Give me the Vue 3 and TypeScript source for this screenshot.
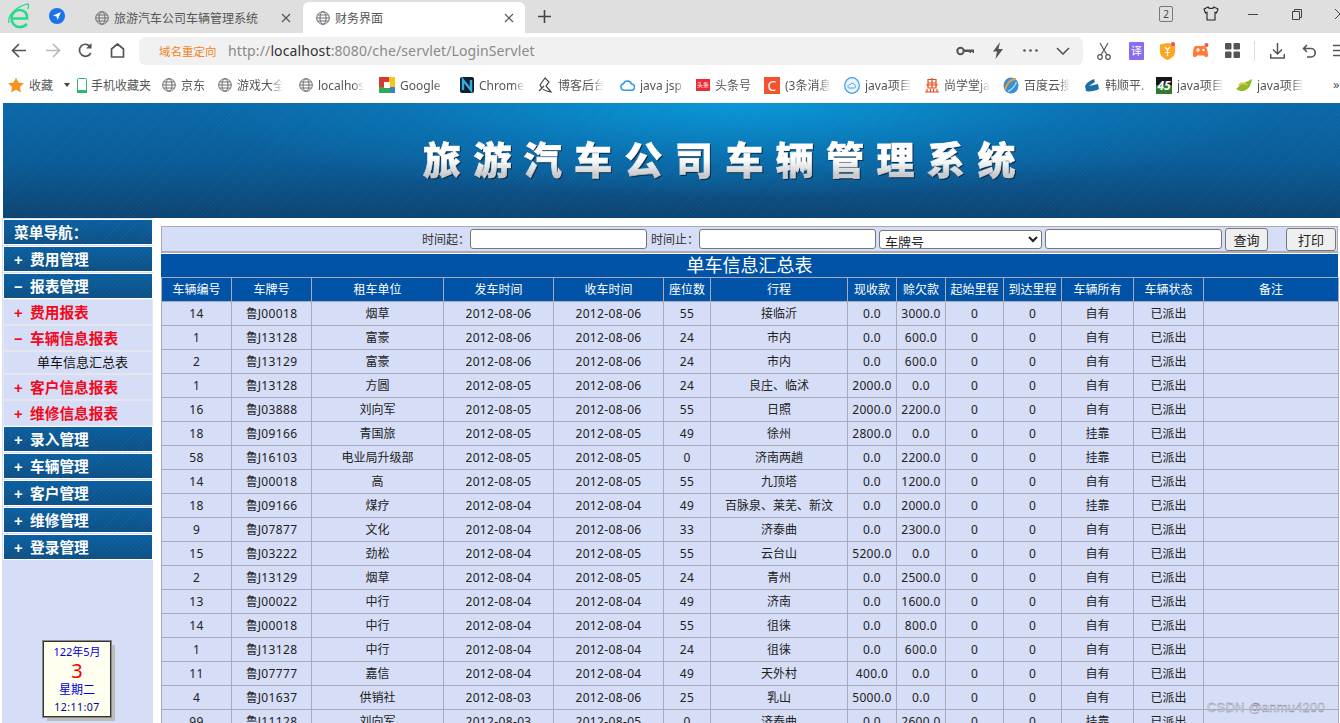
<script setup lang="ts">
interface Row { id: string; plate: string; unit: string; from: string; to: string; seats: string; route: string; paid: string; owed: string; owner: string }
const raw = `14|J00018|烟草|06|06|55|接临沂|0.0|3000.0|自有
1|J13128|富豪|06|06|24|市内|0.0|600.0|自有
2|J13129|富豪|06|06|24|市内|0.0|600.0|自有
1|J13128|方圆|05|06|24|良庄、临沭|2000.0|0.0|自有
16|J03888|刘向军|05|06|55|日照|2000.0|2200.0|自有
18|J09166|青国旅|05|05|49|徐州|2800.0|0.0|挂靠
58|J16103|电业局升级部|05|05|0|济南两趟|0.0|2200.0|挂靠
14|J00018|高|05|05|55|九顶塔|0.0|1200.0|自有
18|J09166|煤疗|04|04|49|百脉泉、莱芜、新汶|0.0|2000.0|挂靠
9|J07877|文化|04|06|33|济泰曲|0.0|2300.0|自有
15|J03222|劲松|04|05|55|云台山|5200.0|0.0|自有
2|J13129|烟草|04|05|24|青州|0.0|2500.0|自有
13|J00022|中行|04|04|49|济南|0.0|1600.0|自有
14|J00018|中行|04|04|55|徂徕|0.0|800.0|自有
1|J13128|中行|04|04|24|徂徕|0.0|600.0|自有
11|J07777|嘉信|04|04|49|天外村|400.0|0.0|自有
4|J01637|供销社|03|06|25|乳山|5000.0|0.0|自有
99|J11128|刘向军|03|05|0|济泰曲|0.0|2600.0|挂靠`
const rows: Row[] = raw.split('\n').map((l) => {
  const p = l.split('|')
  return { id: p[0], plate: p[1], unit: p[2], from: '2012-08-' + p[3], to: '2012-08-' + p[4], seats: p[5], route: p[6], paid: p[7], owed: p[8], owner: p[9] }
})
const widths = [70, 80, 132, 110, 110, 47, 137, 49, 49, 58, 58, 72, 70, 135]
const heads = ['车辆编号', '车牌号', '租车单位', '发车时间', '收车时间', '座位数', '行程', '现收款', '赊欠款', '起始里程', '到达里程', '车辆所有', '车辆状态', '备注']
const bookmarks = [
  { w: 69, icon: 'star', text: '收藏', arrow: true },
  { w: 85, icon: 'phone', text: '手机收藏夹' },
  { w: 56, icon: 'globe', text: '京东' },
  { w: 81, icon: 'globe', text: '游戏大全' },
  { w: 80, icon: 'globe', text: 'localhost' },
  { w: 81, icon: 'google', text: 'Google' },
  { w: 78, icon: 'n', text: 'Chrome' },
  { w: 82, icon: 'blog', text: '博客后台' },
  { w: 76, icon: 'cloud', text: 'java jsp' },
  { w: 68, icon: 'toutiao', text: '头条号' },
  { w: 80, icon: 'csdn', text: '(3条消息' },
  { w: 81, icon: 'ring', text: 'java项目' },
  { w: 78, icon: 'pan', text: '尚学堂ja' },
  { w: 81, icon: 'baidu', text: '百度云搜' },
  { w: 72, icon: 'han', text: '韩顺平.' },
  { w: 80, icon: 'n45', text: 'java项目' },
  { w: 80, icon: 'leaf', text: 'java项目' },
]
const menuBottom = ['录入管理', '车辆管理', '客户管理', '维修管理', '登录管理']
</script>

<template>
  <div class="page">
    <div class="tabbar">
      <svg class="logo" width="22" height="26" viewBox="0 0 22 26"><path d="M3.500 15.500h15.500c.6-5.500-3-8.500-7.500-8.500-4.500 0-8 3.500-8 8.500 0 5 3.500 8.500 8 8.500 3 0 5.500-1 7.500-3" fill="none" stroke="#25dc8c" stroke-width="2.600"/><path d="M1 20C-1 12 9 3 20 .8c1 1.500.5 3.500-.5 5.200" fill="none" stroke="#25dc8c" stroke-width="1.300"/></svg>
      <svg class="nav-app" width="16" height="16" viewBox="0 0 16 16"><circle cx="8" cy="8" r="8" fill="#1a73e8"/><path d="M12 4 4 7.500l3.500 1L8.500 12z" fill="#fff"/></svg>
      <div class="tab inactive">
        <svg class="globe" width="14" height="14" viewBox="0 0 14 14"><g fill="none" stroke="#6e6e6e"><circle cx="7" cy="7" r="6.300"/><ellipse cx="7" cy="7" rx="3" ry="6.300"/><path d="M.7 7h12.600M1.500 4h11M1.500 10h11"/></g></svg>
        <span class="tab-text">旅游汽车公司车辆管理系统</span>
        <svg class="x" width="10" height="10" viewBox="0 0 10 10"><path d="M1 1l8 8M9 1 1 9" stroke="#555" stroke-width="1.200"/></svg>
      </div>
      <div class="tab active">
        <svg class="globe" width="14" height="14" viewBox="0 0 14 14"><g fill="none" stroke="#6e6e6e"><circle cx="7" cy="7" r="6.300"/><ellipse cx="7" cy="7" rx="3" ry="6.300"/><path d="M.7 7h12.600M1.500 4h11M1.500 10h11"/></g></svg>
        <span class="tab-text">财务界面</span>
        <svg class="x" width="10" height="10" viewBox="0 0 10 10"><path d="M1 1l8 8M9 1 1 9" stroke="#555" stroke-width="1.200"/></svg>
      </div>
      <svg class="plus" width="13" height="13" viewBox="0 0 13 13"><path d="M6.500 0v13M0 6.500h13" stroke="#444" stroke-width="1.600"/></svg>
      <div class="win">
        <span class="badge">2</span>
        <svg class="shirt" width="16" height="15" viewBox="0 0 16 15"><path d="M5 1 1 3l1.500 4L4 6.300V14h8V6.300L13.500 7 15 3l-4-2c-.5 2-5.500 2-6 0z" fill="none" stroke="#222" stroke-width="1.100"/></svg>
        <svg class="min" width="10" height="1" viewBox="0 0 10 1"><path d="M0 .5h10" stroke="#444"/></svg>
        <svg class="restore" width="10" height="11" viewBox="0 0 10 11"><path d="M.5 2.500h7v8h-7zM2.500 2.500v-2h7v8h-2" fill="none" stroke="#444"/></svg>
        <svg class="close" width="10" height="10" viewBox="0 0 10 10"><path d="M0 0l10 10M10 0 0 10" stroke="#444"/></svg>
      </div>
    </div>

    <div class="toolbar">
      <svg class="t-back" width="16" height="15" viewBox="0 0 16 15"><path d="M15 7.500H2M8 1 1.500 7.500 8 14" fill="none" stroke="#555" stroke-width="1.700"/></svg>
      <svg class="t-fwd" width="16" height="15" viewBox="0 0 16 15"><path d="M1 7.500h13M8 1l6.500 6.500L8 14" fill="none" stroke="#b9b9b9" stroke-width="1.700"/></svg>
      <svg class="t-reload" width="15" height="15" viewBox="0 0 15 15"><path d="M12.800 10A6 6 0 1 1 12.500 4" fill="none" stroke="#555" stroke-width="1.700"/><path d="M13.500 0v5.500H8z" fill="#555"/></svg>
      <svg class="t-home" width="15" height="15" viewBox="0 0 15 15"><path d="M1.500 14V6L7.500 1l6 5v8z" fill="none" stroke="#555" stroke-width="1.700" stroke-linejoin="round"/></svg>
      <div class="address">
        <span class="redirect">域名重定向</span>
        <span class="url">http://<b>localhost</b>:8080/che/servlet/LoginServlet</span>
        <div class="addr-icons">
          <svg width="18" height="10" viewBox="0 0 18 10"><circle cx="4.500" cy="5" r="3.200" fill="none" stroke="#555" stroke-width="2"/><path d="M8 3.500h10V7h-1.500V6h-1.500v1h-1.500V6H8z" fill="#555"/></svg>
          <svg class="bolt" width="10" height="17" viewBox="0 0 10 17"><path d="M7 0 0 9.500h4L2.500 17 10 7H5.500z" fill="#555"/></svg>
          <svg class="dots" width="15" height="3" viewBox="0 0 15 3"><g fill="#555"><circle cx="1.500" cy="1.500" r="1.300"/><circle cx="7.500" cy="1.500" r="1.300"/><circle cx="13.500" cy="1.500" r="1.300"/></g></svg>
          <svg class="chev" width="14" height="8" viewBox="0 0 14 8"><path d="M1 1l6 6 6-6" fill="none" stroke="#555" stroke-width="1.600"/></svg>
        </div>
      </div>
      <div class="ext">
        <svg class="e-cut" width="14" height="18" viewBox="0 0 14 18"><g fill="none" stroke="#555" stroke-width="1.200"><circle cx="3" cy="15" r="2.300"/><circle cx="11" cy="15" r="2.300"/><path d="M4 13 11 1M10 13 3 1"/></g></svg>
        <span class="yi">译</span>
        <svg class="e-shield" width="15" height="18" viewBox="0 0 15 18"><path d="M0 2.500 7.500 1 15 2.500V10c0 4-4 6.500-7.500 8C4 16.500 0 14 0 10z" fill="#ffa51f"/><path d="M5 5l2.500 3L10 5M7.500 8v6M5 10.500h5" stroke="#fff" stroke-width="1.200" fill="none"/><circle cx="13" cy="2" r="2" fill="#f05050"/></svg>
        <svg class="e-game" width="17" height="16" viewBox="0 0 17 16"><path d="M4 3h8c2.500 0 4 5 4 9 0 3-3 2.500-4 .5H5c-1 2-4 2.500-4-.5C1 8 1.500 3 4 3z" fill="#ff7a35"/><path d="M4 7h4M6 5v4" stroke="#fff" stroke-width="1.200"/><circle cx="11.500" cy="7" r="1.200" fill="#fff"/><circle cx="14.500" cy="2" r="2" fill="#f05050"/></svg>
        <svg class="e-grid" width="15" height="15" viewBox="0 0 15 15"><g fill="#555"><rect width="6.500" height="6.500" rx="1"/><rect x="8.500" width="6.500" height="6.500" rx="1"/><rect y="8.500" width="6.500" height="6.500" rx="1"/><rect x="8.500" y="8.500" width="6.500" height="6.500" rx="1"/></g></svg>
        <i class="sep"></i>
        <svg class="e-down" width="15" height="16" viewBox="0 0 15 16"><path d="M7.500 0v10.500M3 6.500l4.500 4.500L12 6.500M.7 11v4h13.600v-4" fill="none" stroke="#555" stroke-width="1.500"/></svg>
        <svg class="e-undo" width="14" height="14" viewBox="0 0 14 14"><path d="M5 1 1.500 4.500 5 8M2 4.500h7a4 4 0 0 1 0 8.500H5" fill="none" stroke="#555" stroke-width="1.600"/></svg>
        <svg width="8" height="13" viewBox="0 0 8 13"><path d="M0 1.500h8M0 6.500h8M0 11.500h8" stroke="#555" stroke-width="1.700"/></svg>
      </div>
    </div>

    <div class="bookmarks">
      <div v-for="(b, i) in bookmarks" :key="i" class="bm" :style="{ width: b.w + 'px' }">
        <svg v-if="b.icon === 'star'" width="16" height="16" viewBox="0 0 16 16"><path d="M8 .5l2.400 5 5.500.7-4 3.800 1 5.500L8 12.800 3.100 15.500l1-5.500-4-3.800 5.500-.7z" fill="#f8931f"/></svg>
        <svg v-else-if="b.icon === 'phone'" width="10" height="15" viewBox="0 0 10 15"><rect x=".5" y=".5" width="9" height="14" rx="1" fill="#fff" stroke="#2fb96c"/><path d="M0 12h10v3H0z" fill="#2fb96c"/></svg>
        <svg v-else-if="b.icon === 'globe'" width="14" height="14" viewBox="0 0 14 14"><g fill="none" stroke="#6e6e6e"><circle cx="7" cy="7" r="6.300"/><ellipse cx="7" cy="7" rx="3" ry="6.300"/><path d="M.7 7h12.600M1.500 4h11M1.500 10h11"/></g></svg>
        <svg v-else-if="b.icon === 'google'" width="16" height="16" viewBox="0 0 16 16"><path d="M0 0h10v5H5v5H0z" fill="#d93a2e"/><path d="M10 0h6v10h-5V5h-1z" fill="#f7c511"/><path d="M0 10h5v1h6v5H0z" fill="#34a853"/><path d="M11 10h5v6h-5z" fill="#3d7fc9"/><rect x="5" y="5" width="6" height="6" fill="#fff"/></svg>
        <svg v-else-if="b.icon === 'n'" width="14" height="16" viewBox="0 0 14 16"><rect width="14" height="16" rx="2" fill="#10202c"/><path d="M3 13V3l8 10V3" fill="none" stroke="#35a8e0" stroke-width="2.400"/></svg>
        <svg v-else-if="b.icon === 'blog'" width="15" height="16" viewBox="0 0 15 16"><path d="M7 1 2 8c2 4 4 6 11 7L8 9l3-4-4-4zM1 14l5-5" fill="none" stroke="#444" stroke-width="1.200"/></svg>
        <svg v-else-if="b.icon === 'cloud'" width="15" height="12" viewBox="0 0 15 12"><path d="M4 11.300a3.300 3.300 0 0 1-.5-6.500 4.200 4.200 0 0 1 8 .3 3.100 3.100 0 0 1 0 6.200z" fill="none" stroke="#2a9ae8" stroke-width="1.500"/></svg>
        <span v-else-if="b.icon === 'toutiao'" class="tt">头条</span>
        <span v-else-if="b.icon === 'csdn'" class="cs">C</span>
        <svg v-else-if="b.icon === 'ring'" width="16" height="17" viewBox="0 0 16 17"><ellipse cx="8" cy="8.500" rx="7.300" ry="7.800" fill="#eaf4fd" stroke="#4a9fe6" stroke-width="1.300"/><path d="M4.500 11c-1.500-2 .5-4 2-3.500C7 5.500 11 6 10.800 8.500c1.500.3 1 2.500-.3 2.500z" fill="none" stroke="#4a9fe6"/></svg>
        <svg v-else-if="b.icon === 'pan'" width="14" height="16" viewBox="0 0 14 16"><path d="M3 6V2.500h8V6M1 8h12M3 6h8v5H3zM7 1v10M0 15h14M2 12v3M5.500 12v3M8.500 12v3M12 12v3" fill="none" stroke="#e64a19" stroke-width="1.200"/></svg>
        <svg v-else-if="b.icon === 'baidu'" width="16" height="17" viewBox="0 0 16 17"><ellipse cx="8" cy="8.500" rx="7.500" ry="8" fill="#3c8fd0"/><path d="M2 13C4 6 8 2 13 2" fill="none" stroke="#e8a13c" stroke-width="1.800"/><path d="M5 14.500C8 13 12 9 13.500 5" fill="none" stroke="#a9d8f5" stroke-width="1.400"/></svg>
        <svg v-else-if="b.icon === 'han'" width="16" height="14" viewBox="0 0 16 14"><path d="M1 8c2-4 6-6 9-7l1 3-6 4 9-2 1 5c-3 2-11 3-13 2z" fill="#1f6fa5"/></svg>
        <span v-else-if="b.icon === 'n45'" class="n45">45</span>
        <svg v-else-if="b.icon === 'leaf'" width="16" height="13" viewBox="0 0 16 13"><path d="M0 10c2-1 3-4 6-5 3-2 7-3 10-5-1 6-3 11-9 12-3 .5-5-1-7-2z" fill="#8dbb2c"/><path d="M3 6c2-2 6-2 8 0" fill="none" stroke="#e9c13d" stroke-width="2"/></svg>
        <span class="bm-text" :class="{ short: b.arrow }">{{ b.text }}</span>
        <i v-if="b.arrow" class="caret"></i>
      </div>
      <span class="more">»</span>
    </div>

    <div class="banner"><h1 class="banner-title">旅游汽车公司车辆管理系统</h1></div>

    <div class="main">
      <aside class="side">
        <div class="blue"><span class="head">菜单导航：</span></div>
        <div class="blue"><span class="sign">+</span>费用管理</div>
        <div class="blue"><span class="sign">−</span>报表管理</div>
        <div class="light"><span class="sign">+</span>费用报表</div>
        <div class="light"><span class="sign">−</span>车辆信息报表</div>
        <div class="leaf">单车信息汇总表</div>
        <div class="light"><span class="sign">+</span>客户信息报表</div>
        <div class="light"><span class="sign">+</span>维修信息报表</div>
        <div v-for="m in menuBottom" :key="m" class="blue"><span class="sign">+</span>{{ m }}</div>
        <div class="calendar">
          <div class="cal-ym">122年5月</div>
          <div class="cal-day">3</div>
          <div class="cal-week">星期二</div>
          <div class="cal-time">12:11:07</div>
        </div>
      </aside>

      <section class="content">
        <form class="search" @submit.prevent>
          <label>时间起：</label><input class="field" type="text" />
          <label>时间止：</label><input class="field" type="text" />
          <select class="pick"><option>车牌号</option></select>
          <input class="field" type="text" />
          <button class="btn" type="button">查询</button>
          <button class="btn print" type="button">打印</button>
        </form>
        <div class="title">单车信息汇总表</div>
        <table class="grid">
          <colgroup><col v-for="(w, i) in widths" :key="i" :style="{ width: w + 'px' }" /></colgroup>
          <thead><tr><th v-for="h in heads" :key="h">{{ h }}</th></tr></thead>
          <tbody>
            <tr v-for="(r, i) in rows" :key="i">
              <td class="n">{{ r.id }}</td>
              <td class="n"><span class="cjk">鲁</span>{{ r.plate }}</td>
              <td>{{ r.unit }}</td>
              <td class="n">{{ r.from }}</td>
              <td class="n">{{ r.to }}</td>
              <td class="n">{{ r.seats }}</td>
              <td>{{ r.route }}</td>
              <td class="n">{{ r.paid }}</td>
              <td class="n">{{ r.owed }}</td>
              <td class="n">0</td>
              <td class="n">0</td>
              <td>{{ r.owner }}</td>
              <td>已派出</td>
              <td></td>
            </tr>
          </tbody>
        </table>
      </section>
    </div>
    <div class="mark">CSDN @anmu4200</div>
  </div>
</template>

<style>
html, body { margin: 0; height: 723px; overflow: hidden; background: #fff; }
</style>

<style scoped>
.page { position: relative; width: 1340px; height: 723px; overflow: hidden; font-family: "Noto Sans", "Noto Sans CJK SC", sans-serif; font-size: 12px; color: #222; }
svg { flex: none; display: block; }

.tabbar { height: 33px; background: #dfdfdf; display: flex; align-items: flex-end; position: relative; }
.logo { margin: 0 0 4px 8px; }
.nav-app { margin: 0 0 9px 19px; }
.tab { height: 31px; width: 222px; display: flex; align-items: center; padding-left: 13px; box-sizing: border-box; color: #555; border-radius: 6px 6px 0 0; flex: none; }
.inactive { margin-left: 30px; width: 206px; padding-left: 0; }
.active { background: #fff; margin-left: 2px; }
.tab-text { margin-left: 5px; font-size: 12px; white-space: nowrap; flex: 1; }
.x { margin-right: 11px; }
.inactive .x { margin-right: 10px; }
.plus { margin: 0 0 10px 13px; }
.win { position: absolute; right: 0; top: 0; height: 33px; width: 181px; }
.win > * { position: absolute; }
.badge { left: 0; top: 6px; width: 12px; height: 14px; border: 1px solid #777; border-radius: 2px; font-size: 10px; line-height: 14px; text-align: center; color: #444; }
.shirt { left: 44px; top: 6px; }
.min { left: 89px; top: 14px; }
.restore { left: 133px; top: 9px; }
.close { left: 176px; top: 9px; }

.toolbar { height: 35px; display: flex; align-items: center; position: relative; }
.t-back { margin-left: 11px; }
.t-fwd { margin-left: 18px; }
.t-reload { margin-left: 17px; }
.t-home { margin-left: 17px; }
.address { margin-left: 14px; width: 944px; height: 28px; background: #f1f1f1; border-radius: 6px; display: flex; align-items: center; position: relative; flex: none; }
.redirect { margin-left: 20px; color: #f58220; font-size: 11.500px; width: 69px; white-space: nowrap; }
.url { font-size: 14px; color: #8a8a8a; letter-spacing: .12px; white-space: nowrap; }
.url b { font-weight: 400; color: #333; }
.addr-icons { position: absolute; left: 817px; top: 0; height: 28px; display: flex; align-items: center; }
.bolt { margin-left: 19px; }
.dots { margin-left: 20px; }
.chev { margin-left: 18px; }
.ext { margin-left: 14px; display: flex; align-items: center; flex: none; }
.ext > * { flex: none; }
.e-cut { margin-right: 18px; }
.yi { width: 15px; height: 18px; margin-right: 16px; background: #8b6cf0; color: #fff; font-size: 11px; line-height: 18px; text-align: center; border-radius: 1px; }
.e-shield { margin-right: 17px; }
.e-game { margin-right: 16px; }
.e-grid { margin-right: 14px; }
.sep { width: 1px; height: 20px; background: #ddd; margin-right: 15px; }
.e-down { margin-right: 17px; }
.e-undo { margin-right: 17px; }

.bookmarks { height: 32px; display: flex; align-items: center; padding-left: 8px; padding-top: 2px; box-sizing: border-box; position: relative; }
.bm { display: flex; align-items: center; flex: none; color: #555; overflow: hidden; height: 20px; position: relative; }
.bm-text { margin-left: 5px; white-space: nowrap; width: 46px; flex: none; overflow: hidden; -webkit-mask-image: linear-gradient(90deg, #000 75%, transparent); mask-image: linear-gradient(90deg, #000 75%, transparent); font-size: 12px; }
.bm:nth-child(2) .bm-text { width: 62px; -webkit-mask-image: none; mask-image: none; margin-left: 4px; }
.bm:nth-child(3) .bm-text { width: 30px; }
.bm-text.short { width: 26px; -webkit-mask-image: none; mask-image: none; }
.caret { margin-left: 9px; width: 0; height: 0; border: 3.500px solid transparent; border-top: 4px solid #444; border-bottom: 0; }
.tt { width: 14px; height: 12px; background: #ee2a36; color: #fff; font-size: 6px; line-height: 12px; text-align: center; flex: none; white-space: nowrap; }
.cs { width: 16px; height: 17px; background: #f4532c; color: #fff; font-size: 14px; line-height: 17px; text-align: center; flex: none; }
.n45 { width: 16px; height: 17px; background: linear-gradient(#16161a 50%, #2f7d2b 50%); color: #fff; font-weight: 700; font-style: italic; font-size: 12px; line-height: 17px; text-align: center; flex: none; }
.more { position: absolute; left: 1333px; top: 7px; color: #555; font-size: 13px; }

.banner { margin-top: 3px; margin-left: 3px; height: 115px; box-sizing: border-box; display: flex; justify-content: flex-start; padding: 31px 0 0 420px; background:
    repeating-linear-gradient(135deg, rgba(255,255,255,.022) 0 1px, transparent 1px 3px),
    radial-gradient(ellipse 560px 95px at 55% 0, rgba(8,154,218,.95), rgba(8,130,195,.45) 60%, transparent),
    linear-gradient(#0a68a9, #0a5c98 50%, #0d4473); }
.banner-title { margin: 0; font-family: "Noto Sans CJK SC", sans-serif; font-size: 38px; line-height: 48px; font-weight: 900; letter-spacing: 12.400px; white-space: nowrap; background: linear-gradient(#fff 14%, #fff 30%, #c4c7ca 50%, #fff 66%); -webkit-background-clip: text; background-clip: text; color: transparent; -webkit-text-stroke: .7px transparent; filter: drop-shadow(1px 1px 0 #0b2a44); }

.main { display: flex; height: 505px; align-items: stretch; }
.side { margin-left: 2px; width: 151px; background: #d6ddf6; display: flex; flex-direction: column; padding-top: 1px; box-sizing: border-box; }
.blue { height: 26px; box-sizing: border-box; margin: 0 0 1px 1px; width: 150px; border: 1px solid #fff; color: #fff; font-weight: 700; font-size: 14.700px; line-height: 24px; padding-left: 10px; white-space: nowrap; background: repeating-linear-gradient(135deg, rgba(255,255,255,.03) 0 1px, transparent 1px 3px), linear-gradient(#0a5fa0, #0d5085); }
.blue:nth-child(3) { margin-bottom: 0; }
.head { display: inline-block; }
.sign { display: inline-block; width: 16px; font-weight: 700; font-family: "Liberation Sans", sans-serif; }
.light { height: 26px; box-sizing: border-box; width: 150px; margin-left: 1px; border: 1px solid #e6e7ee; color: #f20a1c; font-weight: 700; font-size: 14.700px; line-height: 24px; padding-left: 10px; white-space: nowrap; }
.leaf { height: 23px; box-sizing: border-box; width: 150px; margin-left: 1px; border: 1px solid #e6e7ee; font-size: 13px; line-height: 21px; padding-left: 33px; color: #111; white-space: nowrap; }
.calendar { margin: 80px 0 0 41px; width: 68px; height: 76px; box-sizing: border-box; border: 1px solid #333; outline: 1px solid #888; background: #fffff0; box-shadow: 4px 4px 0 #bdbdbd; text-align: center; color: #0000e0; }
.cal-ym { font-size: 11px; line-height: 20px; }
.cal-day { font-size: 20px; line-height: 18px; color: #f00000; }
.cal-week { font-size: 12px; line-height: 20px; }
.cal-time { font-size: 10.500px; line-height: 15px; color: #000090; letter-spacing: .5px; }

.content { margin: 8px 0 0 8px; width: 1177px; flex: none; }
.search { height: 27px; box-sizing: border-box; border: 1px solid #a9abb8; border-bottom-width: 2px; background: #d6ddf6; display: flex; align-items: center; padding-left: 260px; color: #333; }
.search label { width: 48px; flex: none; white-space: nowrap; }
.field { width: 177px; height: 20px; box-sizing: border-box; border: 1px solid #767676; border-radius: 3px; background: #fff; padding: 0; margin: 0 3px 0 0; flex: none; }
.search label + .field + label { margin-left: 1px; }
.pick { width: 163px; height: 19px; box-sizing: border-box; border: 1px solid #767676; border-radius: 3px; background: #fff; margin: 0 3px 0 0; font: 13px "Noto Sans CJK SC", sans-serif; padding: 0 0 0 1px; flex: none; color: #222; }
.btn { width: 43px; height: 23px; box-sizing: border-box; border: 1px solid #767676; border-radius: 3px; background: #efefef; font: 13px "Noto Sans CJK SC", sans-serif; color: #222; padding: 0; margin: 0; flex: none; }
.print { width: 50px; margin-left: 18px; }
.title { height: 23px; margin-top: 1px; background: #0053a6; color: #fff; font-size: 18px; line-height: 23px; text-align: center; }
.grid { width: 1177px; border-collapse: collapse; table-layout: fixed; }
.grid th, .grid td { border: 1px solid #a9abb8; height: 23px; padding: 0; text-align: center; white-space: nowrap; font-size: 12px; line-height: 16px; }
.grid th { background: #0053a6; color: #fff; font-weight: 400; }
.grid td { background: #d6ddf6; color: #222; }
.n { letter-spacing: .35px; }
.cjk { letter-spacing: 0; }
.mark { position: absolute; left: 1207px; top: 700px; color: #dde2f6; font-size: 13px; font-family: "Liberation Sans", sans-serif; -webkit-text-stroke: .35px #7f828c; white-space: nowrap; letter-spacing: .2px; }
</style>
